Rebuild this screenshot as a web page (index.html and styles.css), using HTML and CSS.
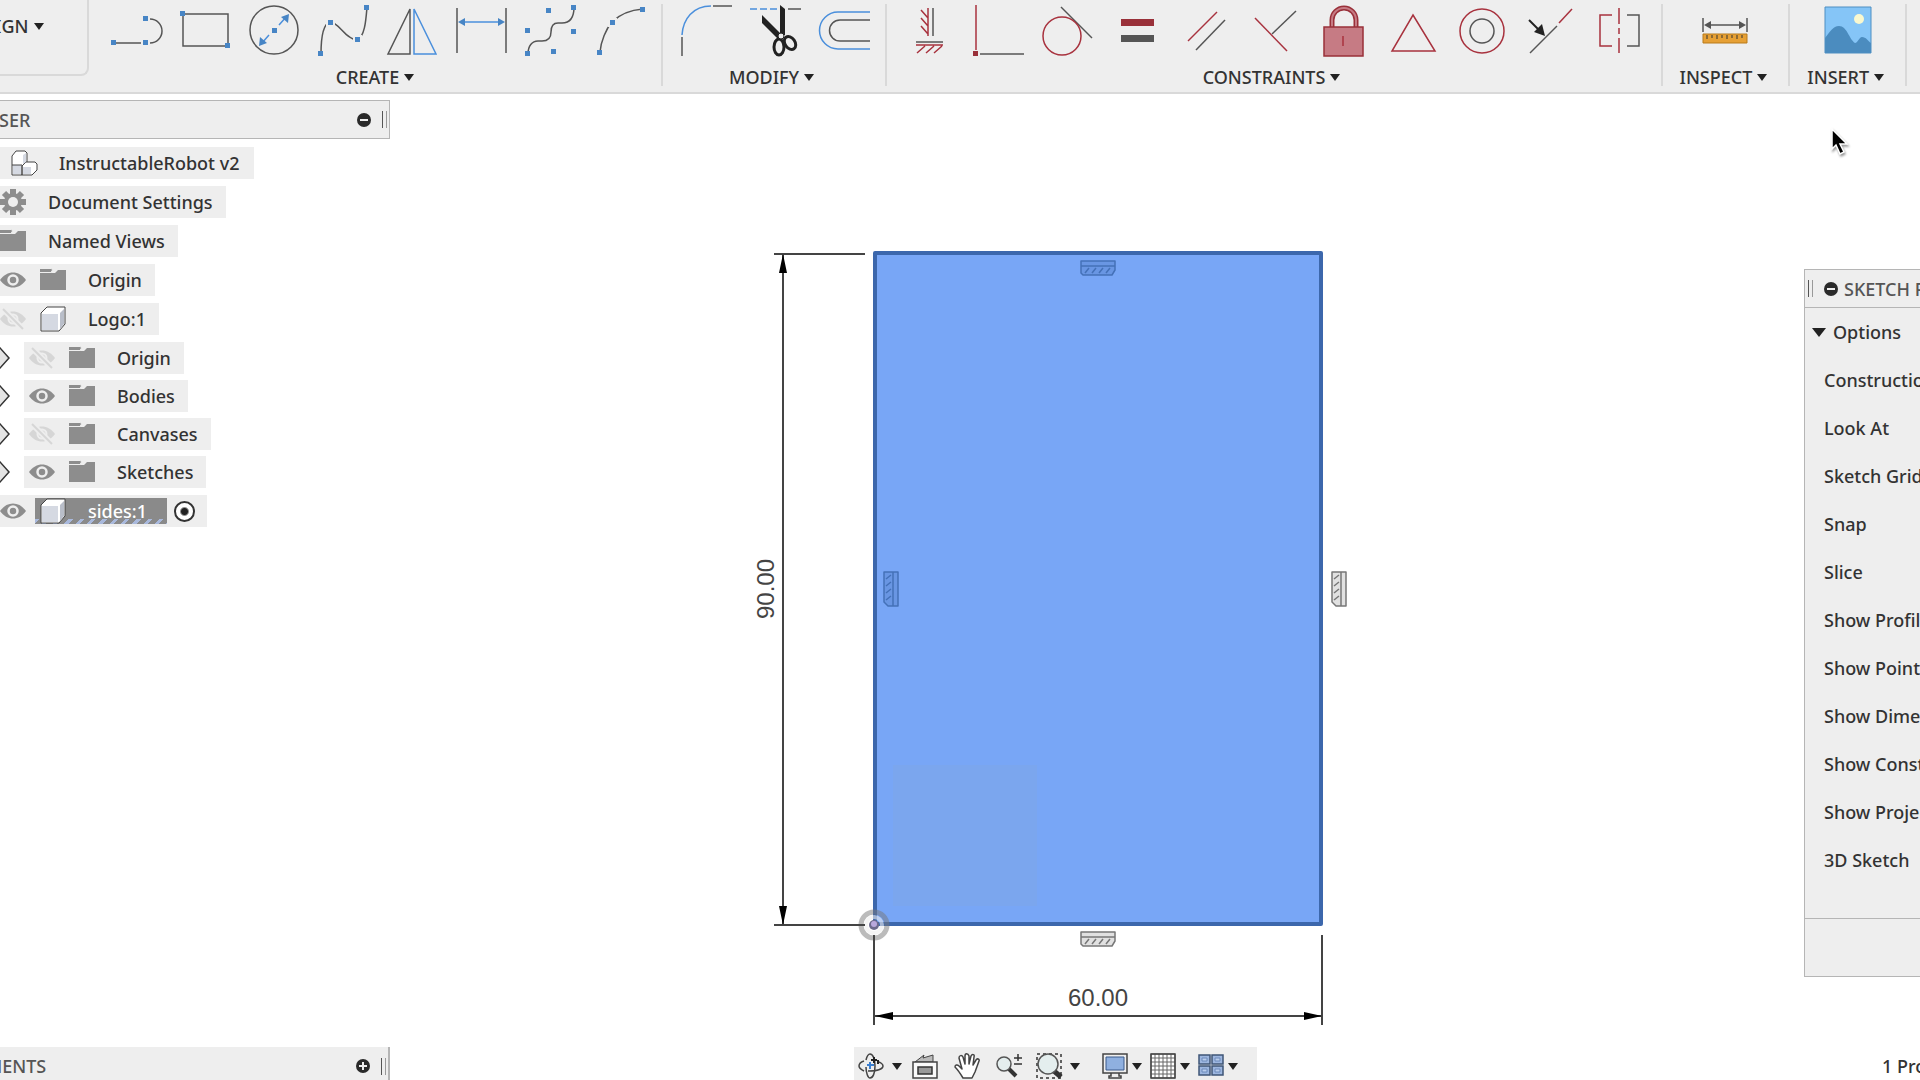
FILE: index.html
```
<!DOCTYPE html>
<html lang="en">

<head>
    <meta charset="UTF-8">
    <title>InstructableRobot v2</title>
    <link rel="stylesheet" href="styles.css">
</head>

<body>
    <!-- shared icons -->
    <svg class="icon-defs" aria-hidden="true">
        <symbol id="folder" viewBox="0 0 26 26">
            <path fill="#8d8d8d" d="M0 6h15l3-3h8v20H0z" />
            <path fill="#8d8d8d" stroke="#eee" d="M-.5 1.500h12l1 1.500-1.500 2.500H-.5z" />
        </symbol>
        <symbol id="eye" viewBox="0 0 26 26">
            <path fill="#8d8d8d" d="M0 13C7 3 19 3 26 13 19 23 7 23 0 13z" />
            <circle cx="13" cy="13" r="4.500" fill="#8d8d8d" stroke="#eee" stroke-width="2.500" />
        </symbol>
        <symbol id="eye-off" viewBox="0 0 26 26">
            <path fill="#d6d6d6" d="M0 13C7 3 19 3 26 13 19 23 7 23 0 13z" />
            <circle cx="13" cy="13" r="4.500" fill="#d6d6d6" stroke="#eee" stroke-width="2" />
            <path stroke="#eee" stroke-width="6" d="M3 3l20 20" />
            <path stroke="#d6d6d6" stroke-width="2" d="M3 3l20 20" />
        </symbol>
        <symbol id="box" viewBox="0 0 26 26">
            <path fill="#fff" stroke="#444" stroke-linejoin="round" d="M1 7l6-6h18v17l-6 7H1z" />
            <path fill="#d5d9e2" d="M2 8h16v16H2z" />
            <path fill="#b9bec9" d="M20 7l4-4v15l-4 5z" />
        </symbol>
        <symbol id="expand" viewBox="0 0 10 22">
            <path fill="#e4e4e4" stroke="#333" stroke-width="1.500" d="M-9 11L0 1l9 10-9 10z" />
        </symbol>
        <symbol id="fix-h" viewBox="0 0 36 16">
            <path fill-opacity=".25" stroke-linejoin="round" d="M1 1h34v9l-3 5H3l-2-2z" />
            <path d="M1 6h34M5 13l4-5M12 13l4-5M19 13l4-5M26 13l4-5" />
        </symbol>
        <symbol id="fix-v" viewBox="0 0 16 36">
            <path fill-opacity=".25" stroke-linejoin="round" d="M1 1h14v34H5l-4-4z" />
            <path d="M10 1v34M3 8l5-4M3 15l5-4M3 22l5-4M3 29l5-4" />
        </symbol>
    </svg>

    <header class="toolbar">
        <button class="workspace">DESIGN<i class="caret"></i></button>

        <section class="group">
            <div class="tools">
                <button class="tool" aria-label="Line"><svg viewBox="0 0 52 52">
                    <path class="ink" d="M4 39h31M36 15h4a12 12 0 0 1 0 24h-4" />
                    <path class="clear" d="M31 34h9v9h-9zM31 10h9v9h-9z" />
                    <path class="dot" d="M1 36h5v5H1zM33 36h5v5h-5zM33 12h5v5h-5z" />
                </svg></button>
                <button class="tool" aria-label="Rectangle"><svg viewBox="0 0 52 52">
                    <path class="ink" d="M4 10h45v32H4z" />
                    <path class="dot" d="M1 7h5v5H1zM46 39h5v5h-5z" />
                </svg></button>
                <button class="tool" aria-label="Circle"><svg viewBox="0 0 52 52">
                    <circle class="ink" cx="26" cy="26" r="24" />
                    <path class="blue" d="M14 39l7-8M31 21l8-9" />
                    <path class="dot" d="M11 42l1-9 7 6zM41 10l-1 9-7-6zM24 24h5v5h-5z" />
                </svg></button>
                <button class="tool" aria-label="Spline"><svg viewBox="0 0 52 52">
                    <path class="ink" d="M4 50C4 35 6 20 13 18 22 18 28 35 40 36 48 33 49 15 50 3" />
                    <path class="clear" d="M9 14h9v9H9zM36 31h9v9h-9z" />
                    <path class="dot" d="M1 47h5v5H1zM11 16h5v5h-5zM38 33h5v5h-5zM47 1h5v5h-5z" />
                </svg></button>
                <button class="tool" aria-label="Mirror"><svg viewBox="0 0 52 52">
                    <path class="ink" d="M24 5v45H2z" />
                    <path class="blue" d="M28 5v45h22z" />
                </svg></button>
                <button class="tool" aria-label="Sketch dimension"><svg viewBox="0 0 52 52">
                    <path class="ink" d="M2 4v45M51 4v45" />
                    <path class="blue" d="M5 18h43" />
                    <path class="dot" d="M3 18l7-4v8zM50 18l-7-4v8z" />
                </svg></button>
                <button class="tool" aria-label="Control point spline"><svg viewBox="0 0 52 52">
                    <path class="ink" d="M4 50C4 42 8 37 14 37h4C24 37 27 34 27 28 27 22 29 19 34 19h4C46 19 50 14 50 3" />
                    <path class="dot" d="M1 47h5v5H1zM1 24h5v5H1zM22 4h5v5h-5zM47 1h5v5h-5zM47 25h5v5h-5zM27 45h5v5h-5z" />
                </svg></button>
                <button class="tool" aria-label="Arc"><svg viewBox="0 0 52 52">
                    <path class="ink" d="M7 48C8 37 13 25 19 18 27 10 37 6 50 5" />
                    <path class="clear" d="M15 14h9v9h-9z" />
                    <path class="dot" d="M4 46h5v5H4zM17 16h5v5h-5zM47 3h5v5h-5z" />
                </svg></button>
            </div>
            <button class="menu">CREATE<i class="caret"></i></button>
        </section>

        <section class="group">
            <div class="tools">
                <button class="tool" aria-label="Fillet"><svg viewBox="0 0 52 52">
                    <path class="blue" d="M3 31C4 15 14 2 32 2" />
                    <path class="ink" d="M34 2h19M3 33v19" />
                </svg></button>
                <button class="tool" aria-label="Trim"><svg viewBox="0 0 52 52">
                    <path class="blue" stroke-dasharray="7 3" d="M2 5h27" />
                    <path class="ink" d="M40 5h13" />
                    <path fill="#222" d="M32 1l5 4v26h-5zM14 11l20 20-4 4-16-16z" />
                    <g fill="none" stroke="#222" stroke-width="3">
                        <ellipse cx="31" cy="43" rx="5" ry="8" />
                        <ellipse cx="42" cy="39" rx="5" ry="7" transform="rotate(-35 42 39)" />
                    </g>
                    <circle cx="33" cy="32" r="3" fill="#eee" stroke="#222" />
                </svg></button>
                <button class="tool" aria-label="Offset"><svg viewBox="0 0 52 52">
                    <path class="blue" stroke-width="2" d="M53 8H21a18 18 0 0 0 0 37h32" />
                    <path class="ink" d="M53 16H23a10 10 0 0 0 0 21h30" />
                </svg></button>
            </div>
            <button class="menu">MODIFY<i class="caret"></i></button>
        </section>

        <section class="group">
            <div class="tools">
                <button class="tool" aria-label="Horizontal/Vertical"><svg viewBox="0 0 52 52">
                    <path class="ink" d="M30 4v28M13 38h27" />
                    <path class="red" d="M25 4v28M18 6l7 8M18 14l7 8M18 22l7 8M13 41h27M22 42l-8 7M31 42l-8 7M39 42l-8 7" />
                </svg></button>
                <button class="tool" aria-label="Coincident"><svg viewBox="0 0 52 52">
                    <path class="ink" d="M8 50h44" />
                    <path class="red" d="M4 1v45" />
                    <path fill="#993039" d="M1 47h5v5H1z" />
                </svg></button>
                <button class="tool" aria-label="Tangent"><svg viewBox="0 0 52 52">
                    <path class="ink" d="M20 3l31 31" />
                    <circle class="red" cx="21" cy="32" r="19" />
                </svg></button>
                <button class="tool" aria-label="Equal"><svg viewBox="0 0 52 52">
                    <path fill="#993039" d="M11 15h33v7H11z" />
                    <path fill="#555" d="M11 31h33v7H11z" />
                </svg></button>
                <button class="tool" aria-label="Parallel"><svg viewBox="0 0 52 52">
                    <path class="red" d="M9 37L38 8" />
                    <path class="ink" d="M17 46l29-30" />
                </svg></button>
                <button class="tool" aria-label="Perpendicular"><svg viewBox="0 0 52 52">
                    <path class="ink" d="M24 30L48 7" />
                    <path class="red" d="M7 14l32 33" />
                </svg></button>
                <button class="tool" aria-label="Fix"><svg viewBox="0 0 52 52">
                    <path fill="none" stroke="#993039" stroke-width="5" d="M15 24V16a12 12 0 0 1 24 0v8" />
                    <path fill="none" stroke="#c67b84" stroke-width="2" d="M15 24V16a12 12 0 0 1 24 0v8" />
                    <path fill="#c67b84" stroke="#993039" stroke-width="1.500" d="M7 23h39v29H7z" />
                    <path class="red" d="M26 32v10" />
                </svg></button>
                <button class="tool" aria-label="Midpoint"><svg viewBox="0 0 52 52">
                    <path class="red" d="M27 11l22 36H6z" />
                </svg></button>
                <button class="tool" aria-label="Concentric"><svg viewBox="0 0 52 52">
                    <circle class="red" cx="27" cy="27" r="22" />
                    <circle class="ink" cx="27" cy="27" r="12" />
                </svg></button>
                <button class="tool" aria-label="Collinear"><svg viewBox="0 0 52 52">
                    <path class="ink" d="M6 49l27-27" />
                    <path class="red" d="M35 19L48 5" />
                    <path stroke="#222" stroke-width="2" d="M5 16l11 11" />
                    <path fill="#222" d="M21 32l-11-4 8-8z" />
                </svg></button>
                <button class="tool" aria-label="Symmetry"><svg viewBox="0 0 52 52">
                    <path class="ink" d="M34 11h12v31H34" />
                    <path class="red" d="M19 11H7v31h12M26 4v16M26 24v6M26 34v15" />
                </svg></button>
            </div>
            <button class="menu">CONSTRAINTS<i class="caret"></i></button>
        </section>

        <section class="group">
            <div class="tools">
                <button class="tool" aria-label="Measure"><svg viewBox="0 0 52 52">
                    <path class="ink" d="M4 14v14M48 14v14M8 21h36" />
                    <path fill="#555" d="M5 21l7-4v8zM47 21l-7-4v8z" />
                    <path fill="#e6a035" stroke="#b97a1b" d="M4 30h44v9H4z" />
                    <path stroke="#333" d="M8 31v4M13 31v3M18 31v4M23 31v3M28 31v4M33 31v3M38 31v4M43 31v3" />
                </svg></button>
            </div>
            <button class="menu">INSPECT<i class="caret"></i></button>
        </section>

        <section class="group">
            <div class="tools">
                <button class="tool" aria-label="Insert image"><svg viewBox="0 0 52 52">
                    <path fill="#85c5f7" d="M3 3h46v46H3z" />
                    <path fill="#4b8cbf" d="M3 34c5-6 8-12 14-12 8 0 10 13 16 17 3 0 4-6 7-6 4 0 6 4 9 6v10H3z" />
                    <circle cx="37" cy="15" r="5" fill="#f9f8cf" />
                    <path fill="none" stroke="#4f8fc2" d="M3 3h46v46H3z" />
                </svg></button>
            </div>
            <button class="menu">INSERT<i class="caret"></i></button>
        </section>
    </header>

    <main class="workarea">
        <aside class="browser">
            <div class="panel-head">
                <h2>BROWSER</h2>
                <button class="round" aria-label="Collapse browser"><svg viewBox="0 0 14 14">
                    <circle cx="7" cy="7" r="7" fill="#2a2a2a" /><path stroke="#eee" stroke-width="2" d="M3 7h8" />
                </svg></button>
                <span class="grip"></span>
            </div>

            <ul class="tree">
                <li class="row root">
                    <svg class="icon" viewBox="0 0 26 26">
                        <g fill="#fff" stroke="#444" stroke-linejoin="round">
                            <path d="M1 6l4-5h9l2 2v11l-5 11H1z" />
                            <path d="M11 16l4-4h9l2 2v6l-5 5H11z" />
                        </g>
                        <path fill="#d5d9e2" d="M2 15h8v9H2zM12 17h8v7h-8zM12 5l3-2v9l-3 2z" />
                        <path stroke="#444" d="M1 15h10v10" fill="none" />
                    </svg>
                    <span>InstructableRobot v2</span>
                </li>
                <li class="row">
                    <svg class="icon" viewBox="0 0 26 26">
                        <g stroke="#8d8d8d" stroke-width="6">
                            <path d="M13 0v26M0 13h26M4 4l18 18M22 4L4 22" />
                        </g>
                        <circle cx="13" cy="13" r="9" fill="#8d8d8d" />
                        <circle cx="13" cy="13" r="5" fill="#eee" />
                    </svg>
                    <span>Document Settings</span>
                </li>
                <li class="row">
                    <svg class="icon"><use href="#folder" /></svg>
                    <span>Named Views</span>
                </li>
                <li class="row">
                    <button class="eye" aria-label="Hide Origin"><svg class="icon"><use href="#eye" /></svg></button>
                    <svg class="icon"><use href="#folder" /></svg>
                    <span>Origin</span>
                </li>
                <li class="row">
                    <button class="eye" aria-label="Show Logo"><svg class="icon"><use href="#eye-off" /></svg></button>
                    <svg class="icon"><use href="#box" /></svg>
                    <span>Logo:1</span>
                </li>
                <li>
                    <ul class="children">
                        <li>
                            <button class="expand" aria-label="Expand Origin"><svg><use href="#expand" /></svg></button>
                            <div class="row">
                                <button class="eye" aria-label="Show Origin"><svg class="icon"><use href="#eye-off" /></svg></button>
                                <svg class="icon"><use href="#folder" /></svg>
                                <span>Origin</span>
                            </div>
                        </li>
                        <li>
                            <button class="expand" aria-label="Expand Bodies"><svg><use href="#expand" /></svg></button>
                            <div class="row">
                                <button class="eye" aria-label="Hide Bodies"><svg class="icon"><use href="#eye" /></svg></button>
                                <svg class="icon"><use href="#folder" /></svg>
                                <span>Bodies</span>
                            </div>
                        </li>
                        <li>
                            <button class="expand" aria-label="Expand Canvases"><svg><use href="#expand" /></svg></button>
                            <div class="row">
                                <button class="eye" aria-label="Show Canvases"><svg class="icon"><use href="#eye-off" /></svg></button>
                                <svg class="icon"><use href="#folder" /></svg>
                                <span>Canvases</span>
                            </div>
                        </li>
                        <li>
                            <button class="expand" aria-label="Expand Sketches"><svg><use href="#expand" /></svg></button>
                            <div class="row">
                                <button class="eye" aria-label="Hide Sketches"><svg class="icon"><use href="#eye" /></svg></button>
                                <svg class="icon"><use href="#folder" /></svg>
                                <span>Sketches</span>
                            </div>
                        </li>
                    </ul>
                </li>
                <li class="row active">
                    <button class="eye" aria-label="Hide sides"><svg class="icon"><use href="#eye" /></svg></button>
                    <label class="selected" for="activate">
                        <svg class="icon"><use href="#box" /></svg>
                        <span>sides:1</span>
                    </label>
                    <input type="radio" id="activate" name="activate" checked>
                </li>
            </ul>
        </aside>

        <section class="canvas">
            <svg class="sketch" viewBox="747 240 700 790">
                <!-- profile -->
                <path fill="#78a6f6" stroke="#3c67ac" stroke-width="4" stroke-linejoin="round" d="M875 253h446v671H875z" />
                <path fill="#7ba6ee" d="M893 765h144v141H893z" />

                <!-- constraint glyphs -->
                <g fill="#3c67ac" stroke="#4471b8" stroke-width="1.500">
                    <use href="#fix-h" x="1080" y="260" width="36" height="16" />
                    <use href="#fix-v" x="883" y="571" width="16" height="36" />
                </g>
                <g fill="#888" stroke="#777" stroke-width="1.500">
                    <use href="#fix-h" x="1080" y="931" width="36" height="16" />
                    <use href="#fix-v" x="1331" y="571" width="16" height="36" />
                </g>

                <!-- origin point -->
                <g fill="none">
                    <circle cx="874" cy="925" r="13" stroke="#777" stroke-opacity=".5" stroke-width="5" />
                    <circle cx="874" cy="925" r="8" stroke="#eee" stroke-opacity=".6" stroke-width="4" />
                    <circle cx="874" cy="925" r="5" fill="#6d6a8c" />
                    <circle cx="874" cy="924" r="3" fill="#b9a8dc" />
                </g>

                <!-- dimensions -->
                <g stroke="#444" stroke-width="2">
                    <path d="M774 254h91M774 925h91M783 255v669" />
                    <path d="M874 935v90M1322 935v90M875 1016h446" />
                </g>
                <path d="M783 254l4 19h-8zM783 925l4-19h-8zM875 1016l18-4v8zM1322 1016l-18-4v8z" />
                <text x="1098" y="1006">60.00</text>
                <text transform="translate(774 589) rotate(-90)">90.00</text>
            </svg>
        </section>

        <aside class="palette">
            <div class="panel-head">
                <span class="grip"></span>
                <button class="round" aria-label="Collapse palette"><svg viewBox="0 0 14 14">
                    <circle cx="7" cy="7" r="7" fill="#2a2a2a" /><path stroke="#eee" stroke-width="2" d="M3 7h8" />
                </svg></button>
                <h2>SKETCH PALETTE</h2>
            </div>
            <button class="options"><i class="caret"></i>Options</button>
            <ul>
                <li>Construction</li>
                <li>Look At</li>
                <li>Sketch Grid</li>
                <li>Snap</li>
                <li>Slice</li>
                <li>Show Profile</li>
                <li>Show Points</li>
                <li>Show Dimensions</li>
                <li>Show Constraints</li>
                <li>Show Projected Geometries</li>
                <li>3D Sketch</li>
            </ul>
            <div class="palette-foot"></div>
        </aside>

        <svg class="cursor" viewBox="0 0 18 28">
            <path stroke="#fff" stroke-width="1.500" d="M1 1v20l4-4 4 9 4-2-4-8h7z" />
        </svg>
    </main>

    <footer class="bottom">
        <div class="panel-head">
            <h2>COMMENTS</h2>
            <button class="round" aria-label="Expand comments"><svg viewBox="0 0 14 14">
                <circle cx="7" cy="7" r="7" fill="#2a2a2a" /><path stroke="#eee" stroke-width="2" d="M3 7h8M7 3v8" />
            </svg></button>
            <span class="grip"></span>
        </div>

        <nav class="navbar">
            <button class="drop" aria-label="Orbit"><svg class="icon" viewBox="0 0 26 26">
                <g fill="none" stroke="#444" stroke-width="1.500">
                    <path d="M8 7C9 3 10 1 12 1c3 0 5 5 5 12s-2 12-5 12c-2 0-4-5-4-11" />
                    <path d="M6 8C3 9 1 10 1 13c0 2 3 4 5 5M10 18c9 0 15-2 15-5 0-2-3-4-5-4" />
                    <path stroke="#222" stroke-width="2" d="M16 4v6M13 7h6M20 7v4" />
                </g>
                <path stroke="#3b7fd0" stroke-width="2" d="M12 9v7M9 12h7" />
            </svg><i class="caret"></i></button>
            <button class="plain" aria-label="Look at"><svg class="icon" viewBox="0 0 26 26">
                <path fill="#bbb" stroke="#444" d="M3 9l9-7-1 3 10-3v7z" />
                <path fill="#fafafa" stroke="#444" stroke-width="1.500" d="M1 9h24v16H1z" />
                <path fill="#999" stroke="#333" stroke-width="1.500" d="M6 14h14v7H6z" />
            </svg></button>
            <button class="plain" aria-label="Pan"><svg class="icon" viewBox="0 0 26 26">
                <path fill="#fff" stroke="#444" stroke-width="1.500" stroke-linejoin="round" d="M9 25C6 20 4 17 1 14c0-2 2-3 4-1l3 3L5 5c0-3 3-3 4-1l2 7V3c0-3 3-3 4 0v8l2-8c1-2 4-2 3 1l-1 8 3-5c1-2 4-1 3 1l-4 11-3 6z" />
            </svg></button>
            <button class="plain" aria-label="Zoom"><svg class="icon" viewBox="0 0 26 26">
                <path stroke="#333" stroke-width="4" d="M13 16l7 7" />
                <circle cx="8" cy="11" r="7" fill="#e4eeee" stroke="#555" stroke-width="1.500" />
                <path stroke="#333" stroke-width="1.500" d="M22 1v7M18 5h8M18 11h8" />
            </svg></button>
            <button class="drop" aria-label="Fit"><svg class="icon" viewBox="0 0 26 26">
                <path fill="none" stroke="#333" stroke-width="1.500" stroke-dasharray="3 3" d="M1 1h24v24H1z" />
                <path stroke="#333" stroke-width="5" d="M18 18l7 6" />
                <circle cx="12" cy="11" r="10" fill="#e4eeee" stroke="#555" stroke-width="1.500" />
            </svg><i class="caret"></i></button>
            <button class="drop tight first" aria-label="Display settings"><svg class="icon" viewBox="0 0 26 26">
                <path fill="#eee" stroke="#444" stroke-width="1.500" d="M1 1h24v19H1zM9 20h8v3h2v2H7v-2h2z" />
                <path fill="#8fb0e0" stroke="#3b5a8c" d="M4 4h18v13H4z" />
            </svg><i class="caret"></i></button>
            <button class="drop tight" aria-label="Grid and snaps"><svg class="icon" viewBox="0 0 26 26">
                <path fill="#fff" stroke="#666" d="M1 1h24v24H1zM5 1v24M9 1v24M13 1v24M17 1v24M21 1v24M1 5h24M1 9h24M1 13h24M1 17h24M1 21h24" />
                <path fill="none" stroke="#444" stroke-width="1.500" d="M1 1h24v24H1z" />
            </svg><i class="caret"></i></button>
            <button class="drop tight" aria-label="Viewports"><svg class="icon" viewBox="0 0 26 26">
                <path fill="#9db6df" stroke="#3f5577" stroke-width="1.500" d="M1 2h11v9H1zM14 2h11v9H14zM1 13h11v9H1zM14 13h11v9H14z" />
                <path fill="#b9cdec" stroke="#6d8abb" d="M4 5h5v3H4zM17 5h5v3h-5zM4 16h5v3H4zM17 16h5v3h-5z" />
            </svg><i class="caret"></i></button>
        </nav>

        <span class="status">1 Profile</span>
    </footer>
</body>

</html>
```
FILE: styles.css
```
* {
    box-sizing: border-box;
}

body {
    margin: 0;
    height: 100vh;
    display: flex;
    flex-direction: column;
    overflow: hidden;
    background: #fff;
    color: #333;
    font: 500 18px/24px "Noto Sans", "Open Sans", sans-serif;
    white-space: nowrap;
}

button {
    display: flex;
    align-items: center;
    padding: 0;
    border: 0;
    background: none;
    color: inherit;
    font: inherit;
}

ul {
    margin: 0;
    padding: 0;
    list-style: none;
}

svg {
    display: block;
    flex: none;
    overflow: visible;
}

.icon-defs {
    display: none;
}

.icon {
    width: 26px;
    height: 26px;
}

.caret {
    margin-left: 5px;
    border: 5px solid transparent;
    border-top: 7px solid #222;
    border-bottom: 0;
}

/* top toolbar */
.toolbar {
    display: flex;
    flex: none;
    height: 94px;
    background: #eee;
    border-bottom: 2px solid #d9d9d9;
}

.workspace {
    flex: none;
    height: 98px;
    margin: -22px 5px 0 -61px;
    padding: 0 43px 0 23px;
    border: solid #d9d9d9;
    border-width: 0 2px 2px 0;
    border-radius: 0 0 8px 0;
}

.group {
    flex: none;
    display: flex;
    flex-direction: column;
    align-items: center;
    margin: 4px 0 6px;
    padding: 0 16px;
    border-right: 2px solid #d9d9d9;
}

.tools {
    display: flex;
    gap: 17px;
}

.tool svg {
    width: 52px;
    height: 52px;
}

.menu {
    margin: 9px 5px 0 1px;
}

.ink,
.blue,
.red {
    fill: none;
    stroke: #555;
    stroke-width: 1.5px;
}

.blue {
    stroke: #4a8fdc;
}

.red {
    stroke: #a8323e;
}

.dot {
    fill: #4785c5;
}

.clear {
    fill: #eee;
}

/* work area: browser, sketch canvas, palette */
.workarea {
    flex: 1;
    min-height: 0;
    display: grid;
    grid-template-columns: 390px 1fr 116px;
    align-items: start;
}

.panel-head {
    display: flex;
    align-items: center;
    height: 39px;
    background: #eee;
    border: 1px solid #b5b5b5;
    color: #555;
}

.panel-head h2 {
    margin: 0;
    font: inherit;
}

.round svg {
    width: 14px;
    height: 14px;
}

.grip {
    width: 5px;
    height: 17px;
    border-left: 1px solid #555;
    border-right: 1px solid #999;
}

.browser .panel-head,
.bottom .panel-head {
    margin-left: -60px;
    padding: 0 2px 0 4px;
}

.browser h2,
.bottom h2 {
    flex: 1;
}

.browser .grip,
.bottom .grip {
    margin-left: 11px;
}

.browser {
    padding-top: 6px;
}

.tree {
    display: flex;
    flex-direction: column;
    gap: 7px;
    padding-top: 8px;
}

.row {
    display: flex;
    align-items: center;
    gap: 14px;
    width: max-content;
    height: 32px;
    padding-right: 13px;
    background: #eee;
}

.row span {
    margin-left: 8px;
}

.root {
    padding: 0 15px 0 11px;
}

.children {
    display: flex;
    flex-direction: column;
    gap: 6px;
}

.children li {
    display: flex;
    align-items: center;
    gap: 14px;
}

.children .row {
    padding-left: 5px;
}

.expand svg {
    width: 10px;
    height: 22px;
}

.active {
    gap: 9px;
}

.selected {
    display: flex;
    align-items: center;
    gap: 14px;
    height: 26px;
    padding: 0 20px 0 5px;
    background: repeating-linear-gradient(135deg, #a9b9dc 0 3px, #8a8a8a 3px 8px) bottom / 100% 5px no-repeat #8a8a8a;
    color: #fff;
}

#activate {
    appearance: none;
    width: 21px;
    height: 21px;
    margin: 0 -1px 0 -2px;
    border: 2px solid #333;
    border-radius: 50%;
    background: radial-gradient(#222 0 3px, #fff 5px);
}

.canvas {
    display: flex;
    justify-content: center;
    padding-top: 146px;
}

.sketch {
    width: 700px;
    height: 790px;
}

.sketch text {
    fill: #444;
    font: 24px "Liberation Sans", Arial, sans-serif;
    text-anchor: middle;
}

.palette {
    margin-top: 175px;
    background: #eee;
    border: 1px solid #b5b5b5;
    border-right: 0;
    overflow: hidden;
}

.palette .panel-head {
    height: 38px;
    border-width: 0 0 1px;
    padding-left: 3px;
}

.palette .grip {
    flex: none;
    margin-right: 11px;
}

.palette h2 {
    margin-left: 6px;
}

.options {
    height: 48px;
    padding-left: 7px;
}

.options .caret {
    margin: 0 7px 0 0;
    border-width: 9px 7px 0;
}

.palette ul {
    padding: 0 0 34px 19px;
}

.palette li {
    line-height: 48px;
}

.palette-foot {
    height: 58px;
    border-top: 1px solid #b5b5b5;
}

.cursor {
    position: absolute;
    top: 128px;
    left: 1831px;
    width: 18px;
    height: 28px;
    filter: drop-shadow(1px 2px 1px #999);
}

/* bottom bar runs slightly past the window edge */
.bottom {
    display: flex;
    flex: none;
    align-items: center;
    height: 38px;
    margin-bottom: -5px;
}

.bottom .panel-head {
    flex: none;
    width: 450px;
    border-width: 0 2px 0 0;
}

.navbar {
    display: flex;
    align-items: center;
    gap: 8px;
    height: 38px;
    margin-left: 464px;
    padding: 0 19px 0 4px;
    background: #eee;
}

.plain {
    padding: 0 6px 0 2px;
}

.drop .caret {
    margin-left: 8px;
}

.tight .caret {
    margin-left: 4px;
}

.first {
    margin-left: 14px;
}

.status {
    width: 38px;
    margin-left: auto;
    overflow: hidden;
}
```
